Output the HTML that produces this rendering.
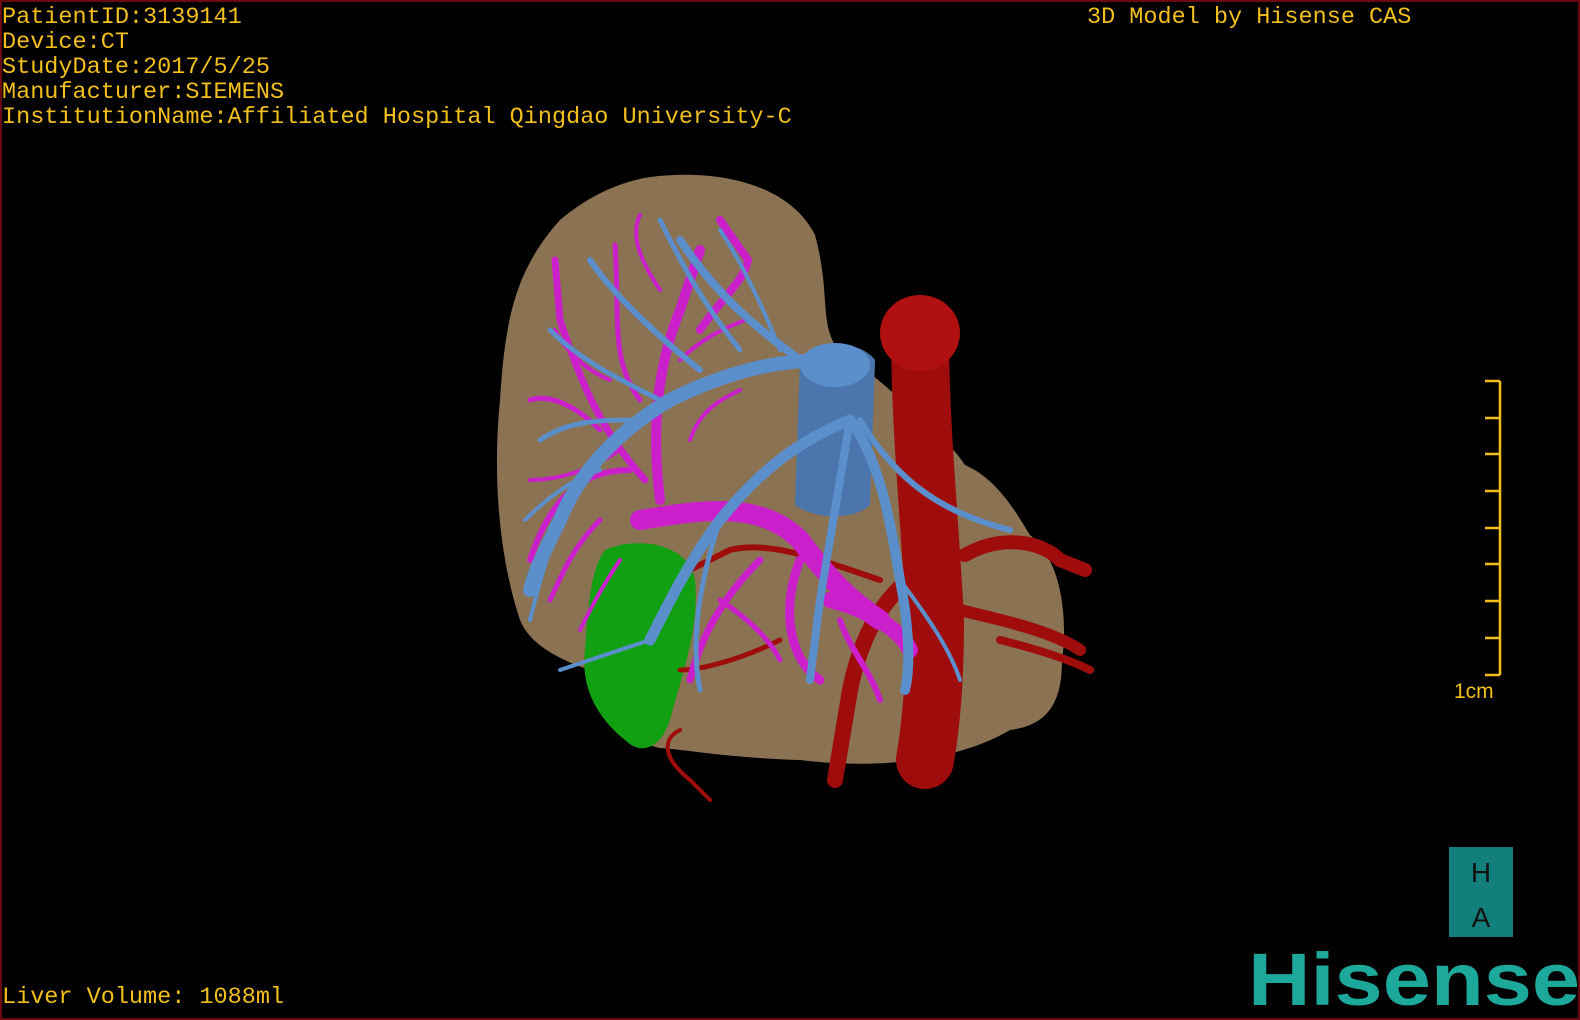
<!DOCTYPE html>
<html><head><meta charset="utf-8"><style>
html,body{margin:0;padding:0;background:#000;}
#s{position:relative;width:1580px;height:1020px;background:#000;overflow:hidden;box-sizing:border-box;border:2px solid #6a0a10;}
.t{position:absolute;color:#f2bf1c;font-family:"Liberation Mono",monospace;font-size:23.5px;line-height:25px;white-space:pre;}
</style></head><body><div id="s">
<div class="t" style="left:0;top:3px">PatientID:3139141
Device:CT
StudyDate:2017/5/25
Manufacturer:SIEMENS
InstitutionName:Affiliated Hospital Qingdao University-C</div>
<div class="t" style="left:1085px;top:3px">3D Model by Hisense CAS</div>
<div class="t" style="left:0;top:983px">Liver Volume: 1088ml</div>
<div class="t" style="left:1452px;top:677px;font-size:21px;font-family:'Liberation Sans',sans-serif">1cm</div>
<svg width="1580" height="1020" style="position:absolute;left:-2px;top:-2px">
<g stroke="#f2bf1c" stroke-width="2.5">
<line x1="1500" y1="381" x2="1500" y2="675"/>
<line x1="1485" y1="381" x2="1500" y2="381"/><line x1="1485" y1="418" x2="1500" y2="418"/><line x1="1485" y1="454" x2="1500" y2="454"/><line x1="1485" y1="491" x2="1500" y2="491"/><line x1="1485" y1="528" x2="1500" y2="528"/><line x1="1485" y1="564" x2="1500" y2="564"/><line x1="1485" y1="601" x2="1500" y2="601"/><line x1="1485" y1="638" x2="1500" y2="638"/><line x1="1485" y1="675" x2="1500" y2="675"/>
</g>
<rect x="1449" y="847" width="64" height="90" fill="#137f7c"/>
<text x="1481" y="882" font-family="Liberation Sans,sans-serif" font-size="28" text-anchor="middle" fill="#111">H</text>
<text x="1481" y="927" font-family="Liberation Sans,sans-serif" font-size="28" text-anchor="middle" fill="#111">A</text>
<text x="1248" y="1005" font-family="Liberation Sans,sans-serif" font-weight="bold" font-size="74" fill="#1ca89a" textLength="332" lengthAdjust="spacingAndGlyphs">Hisense</text>
<!-- liver -->
<path d="M650,177 C720,168 790,185 815,235 C830,290 820,320 835,345 C880,380 950,440 965,465 C1000,480 1020,520 1030,535 C1062,560 1068,620 1062,660 C1062,700 1050,725 1010,730 C960,760 880,770 800,760 C730,758 690,750 660,748 C620,740 600,700 590,670 C560,660 530,645 520,620 C500,560 492,480 500,400 C505,320 515,270 560,220 C590,195 620,182 650,177 Z" fill="#8b7253"/>
<!-- IVC -->
<path d="M800,360 C820,340 860,340 875,360 L870,505 C855,520 815,520 795,505 Z" fill="#4a76ad"/>
<!-- gallbladder -->
<path d="M605,550 C640,535 690,545 695,580 C700,630 680,680 670,720 C660,750 640,755 625,740 C600,720 580,690 585,650 C588,610 590,570 605,550 Z" fill="#11a011"/>
<!-- aorta -->
<g fill="none" stroke="#9e0c0c" stroke-linecap="round">
<path d="M920,330 C920,430 930,520 935,620 C935,690 930,730 925,760" stroke-width="58"/>
<path d="M965,555 C1000,535 1040,540 1060,560 L1085,570" stroke-width="14"/>
<path d="M960,610 C1000,620 1050,630 1080,650" stroke-width="12"/>
<path d="M1000,640 C1040,650 1070,660 1090,670" stroke-width="8"/>
<path d="M915,575 C880,600 860,640 850,690 L835,780" stroke-width="16"/>
<path d="M880,580 C820,560 770,540 730,550 L690,570" stroke-width="6"/>
<path d="M680,730 C660,740 665,760 690,780 L710,800" stroke-width="4"/>
<path d="M780,640 C740,660 700,670 680,670" stroke-width="5"/>
</g>
<ellipse cx="920" cy="333" rx="40" ry="38" fill="#b01010"/>
<!-- magenta portal -->
<g fill="none" stroke="#cc1fcc" stroke-linecap="round">
<path d="M640,520 C700,510 760,500 800,540 C830,580 850,600 880,620" stroke-width="20"/>
<path d="M660,500 C650,420 660,360 680,310 L700,250" stroke-width="10"/>
<path d="M645,480 C600,430 580,380 560,320 L555,260" stroke-width="7"/>
<path d="M700,330 C720,300 745,280 748,260 L720,220" stroke-width="8"/>
<path d="M630,470 C580,470 550,500 530,560" stroke-width="6"/>
<path d="M600,430 C570,400 545,395 530,400" stroke-width="5"/>
<path d="M760,560 C720,600 700,640 690,680" stroke-width="7"/>
<path d="M800,560 C780,610 790,660 820,680" stroke-width="9"/>
<path d="M640,400 C610,360 620,320 615,245" stroke-width="5"/>
<path d="M660,290 C640,260 630,235 640,215" stroke-width="4"/>
<path d="M690,440 C700,410 720,400 740,390" stroke-width="4"/>
<path d="M600,520 C570,550 560,580 550,600" stroke-width="5"/>
<path d="M830,600 C870,610 900,630 910,650" stroke-width="16"/>
<path d="M620,450 C590,470 560,480 530,480" stroke-width="4"/>
<path d="M610,380 C585,370 565,350 555,330" stroke-width="4"/>
<path d="M680,360 C700,340 720,330 745,320" stroke-width="4"/>
<path d="M720,600 C750,620 770,640 780,660" stroke-width="5"/>
<path d="M840,620 C850,650 870,670 880,700" stroke-width="6"/>
<path d="M620,560 C600,590 590,610 580,630" stroke-width="4"/>
</g>
<!-- blue hepatic veins -->
<g fill="none" stroke="#5b8fcc" stroke-linecap="round">
<path d="M830,360 C780,360 730,370 670,400 C620,430 580,470 560,520 C545,550 535,570 530,590" stroke-width="14"/>
<path d="M850,420 C800,440 760,470 720,520 C690,560 670,600 650,640" stroke-width="11"/>
<path d="M850,420 C840,480 830,540 820,600 L810,680" stroke-width="8"/>
<path d="M850,420 C880,460 890,520 900,580 C910,630 910,670 905,690" stroke-width="10"/>
<path d="M860,420 C890,470 930,510 1010,530" stroke-width="6"/>
<path d="M720,520 C700,580 690,640 700,690" stroke-width="5"/>
<path d="M800,360 C760,330 720,300 680,240" stroke-width="8"/>
<path d="M740,350 C700,300 680,260 660,220" stroke-width="5"/>
<path d="M700,370 C650,330 610,290 590,260" stroke-width="6"/>
<path d="M660,400 C620,380 580,360 550,330" stroke-width="5"/>
<path d="M640,420 C600,420 570,420 540,440" stroke-width="5"/>
<path d="M600,470 C570,480 545,500 525,520" stroke-width="4"/>
<path d="M780,350 C760,300 740,260 720,230" stroke-width="4"/>
<path d="M900,580 C930,620 950,650 960,680" stroke-width="4"/>
<path d="M650,640 C620,650 590,660 560,670" stroke-width="4"/>
<path d="M560,520 C545,560 535,600 530,620" stroke-width="4"/>
</g>
<ellipse cx="835" cy="365" rx="35" ry="22" fill="#5b8fcc"/>
</svg>
</div></body></html>
